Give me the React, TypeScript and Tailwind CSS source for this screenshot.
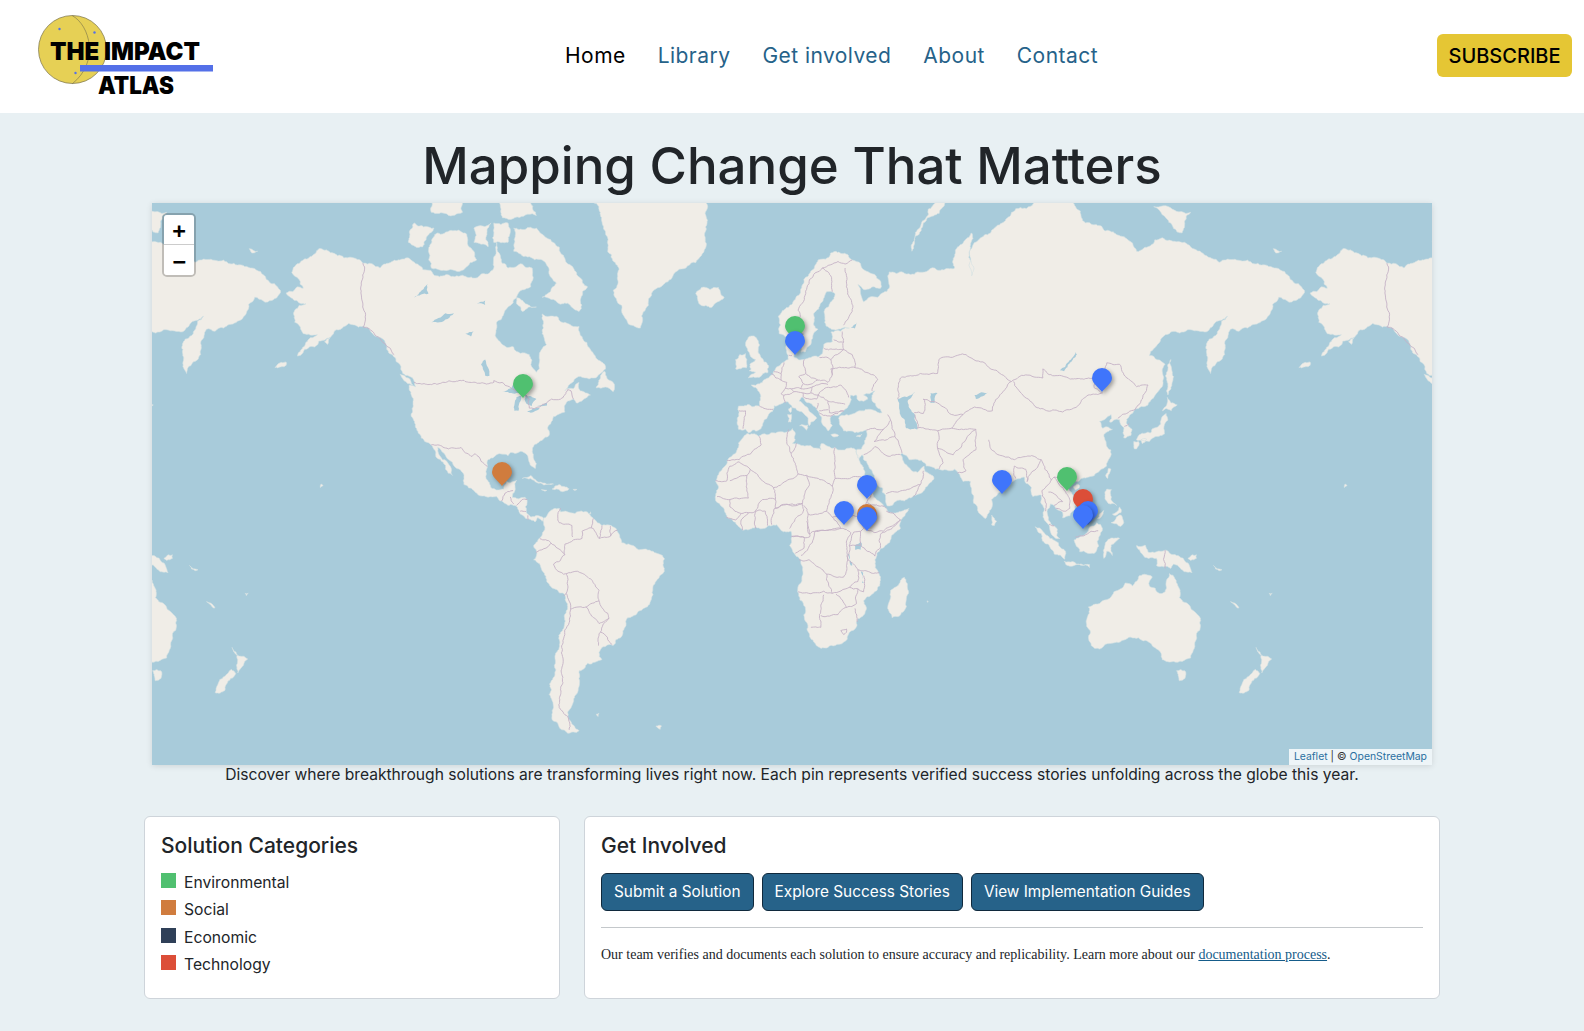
import React from 'react';

// lon,lat outlines, projected to web mercator at zoom 2 below
const LAND: string[] = [
  // north america
  '-168,65.6 -164,66.5 -162,66.3 -166,68.4 -163,69.7 -156.5,71.3 -150,70.5 -141,69.6 -135,69 -128,70 -124,70 -115,68 -108,68 -100,68 -95,69 -94,72 -90,69 -85,69.5 -81.5,69 -82,66.5 -87,65 -90,63.5 -94,61 -94.5,58.7 -92,57 -88,56.5 -82.5,55 -82,52.9 -80,51.3 -79,52 -79,55 -76.5,57 -78,59 -78,62.4 -73,62 -70,61 -65,60.3 -64,58.5 -61,56 -56,53 -55.7,52 -60,50 -66,50 -70,47 -65,49 -64.5,47 -61,46 -64,44.5 -66,44 -67,45 -70,43.5 -70,41.7 -74,40.5 -75,38.5 -76,37 -75.5,35.3 -78,33.8 -81,32 -81.3,30 -80,26.8 -80.4,25.2 -81.8,26 -82.8,28 -84,30 -86,30.4 -89,30.2 -90,29.2 -94,29.5 -97,28 -97.5,25 -97.7,22 -96,19 -94,18.2 -91.5,18.5 -90.5,21 -87,21.5 -87.5,19 -88.3,17 -88.5,15.8 -84,15.8 -83.3,14 -83.6,11 -82,9 -79.5,9.5 -77.5,8.6 -78,7.5 -79.5,8.8 -80.5,7.3 -83,8.3 -85.7,10 -87.5,13 -91.5,14 -94,16 -97,15.8 -102,18 -105.5,20 -105.5,22.5 -109,26 -112.5,30 -114.7,31.7 -113,28 -110,24 -109.5,23 -112,25 -115,28.5 -117,32.5 -120.5,34.5 -122.5,37.5 -124,40.5 -124,46 -124.7,48.4 -122.5,48 -123,49.3 -127,51 -130,54.5 -134,58 -139,60 -146,60.8 -151,59.5 -154,58 -158,56.5 -164,54.7 -160,58 -157,58.8 -162,59 -165,61 -165,63 -161,64 -165,64.5',
  // south america
  '-77.5,8.6 -75.5,10.8 -72,12 -71.5,10.8 -68,10.5 -62,10.7 -57,6 -52,5 -50,0 -44,-2.5 -39,-3 -35,-5.5 -35,-9 -39,-15 -39,-18 -41,-22 -48,-25.5 -48.5,-28 -53,-34 -57,-34.5 -58,-36 -57,-38 -62,-39 -65,-41 -65,-45 -66,-47 -69,-51 -68,-53 -65,-55 -69,-55.5 -74,-53 -75.5,-47 -73.5,-42 -73.5,-37 -71.5,-30 -70,-18 -76,-14 -81,-6 -80,-3 -81,-1 -78.5,2 -77.5,4 -77.5,7',
  // eurasia
  '-9,37 -9.5,38.7 -8.8,41.5 -9,43.2 -1.5,43.4 -1.2,46 -4.5,48.4 -1.5,48.7 1.5,50 4,52 8.5,54 8,57 10.5,57.5 10.5,54.5 14,54 19,54.5 21,57 24,57.5 23.5,59.3 30,60 23,60 21.3,61 21.3,63 25,65.5 22,65.8 17.5,62.5 17.5,60.5 19,59.8 16.5,57 14.5,55.5 13,55.5 11,59 8,58 5.3,59 5,62 10,64 14,67.5 19,70 25,71 31,70 41,67.3 41,66.3 33,66.8 35,64.3 40,65 44,66.3 44,68.5 54,68.5 60,69 67,69 68,71.5 73,73 73,68 74,72 81,73.5 87,75 100,76.5 104,77.7 113,74 127,72.5 131,71 140,72.5 150,71.5 160,69.7 170,70 180,69 190,66 187,64.5 181,65 178,62.5 170,60 164,59.8 162,57.5 162,55 157,51 155.7,56 156.5,58 163,62 155,59.3 143,59.3 135.5,54.8 141,53 140,48 135,43.5 130.5,42.5 127.5,39.8 129.4,37 129,35.2 126.5,34.5 126.5,37.5 125,39.6 121.5,39 122,41 118,39.2 119,37.3 122.5,37 119.5,35 122,31 121.5,28.5 118,24.5 113.5,22.3 110,21 108.2,21.6 106,19.5 109,15 109.2,11.5 105,8.7 105,10.5 102.5,12 100.7,13.5 99.5,11 100,8 103,5 104,1.4 101,3 100.3,6 98.5,8 98.5,12 97.5,16.5 94.5,16 94,19 91.5,22.5 88.5,21.7 86.5,20 82,16.5 80,15 80,12 78,8.5 76,10 73,18 72.6,21 70,21 69,22.5 67,25 61.5,25 57,26 56.5,27 51,28 48.5,30 48,29.5 50,26.5 51.5,25 54,24 56.3,26 56.5,24.3 59.7,22.5 55,17 52,15.7 45,13 43.3,12.8 42.7,16 39,21 35,28 34.5,29.5 33,28.5 32.5,30 32.5,31 34.3,31.3 35.8,34.5 36,36.8 32,36 28,36.5 26.5,38.5 26.2,40 29,41 35,42 41.5,41.5 38,44.5 39,47 35,46 36.5,45 33.5,44.5 32.5,46 30.5,46 28,42 26,40.8 23.5,40.5 24,38 22.5,36.5 19.5,41 18.5,42.5 13.5,45.5 12.3,44.5 16,41.8 18.5,40 16.5,39 16,38 15.5,40 12,42 8.5,44.3 3.5,43.3 3,41.8 0,39.5 -0.5,38 -2,36.7 -5.5,36 -6.5,37',
  // africa
  '-6,35.8 -2,35 10,37.2 11,34 10,33 15,32.3 20,31 20,32.8 25,31.7 32.5,31 32.5,30 35.5,24 37.3,19 39.5,15 43,12 44,10.5 51,12 48,5 41,-2 39,-6 40.5,-11 40.7,-15 35,-20 35.5,-24 32.8,-26 32,-29 28,-33 25,-34 20,-34.8 18.3,-34 15,-27 14.5,-22 11.8,-17 13.7,-11 12,-5 9,-1 9.5,4 6,4.3 4.5,6.3 -4,5.2 -7.5,4.4 -13,9 -17,14.7 -16,19 -17,21 -13,27.7 -10,30 -9,33',
  // australia, tasmania, nz
  '114,-22 113.5,-26 115,-34 118,-35 124,-33 129,-31.5 134,-32.5 138,-35 140,-38 144,-38.5 147,-38.5 150,-37.5 151.5,-33 153.5,-28 153,-25 149,-21 146,-19 145.5,-15 142.5,-10.8 141.5,-13 141,-17 139,-17.5 135.5,-15 136.5,-12 132,-11.5 129.5,-15 127,-14 123,-17 119,-20',
  '145,-41 148,-41 148,-43 146,-43.6',
  '173,-34.5 175.5,-37 178.5,-37.8 177,-39.5 175,-41.6 174.5,-39.5 174.7,-37.5',
  '172.7,-40.6 174.3,-41.7 171,-44.5 170.5,-46 167,-46.5 168,-44.5',
  // south east asia
  '131,-1 134,-0.8 135,-3.3 141,-2.6 145,-4.5 148,-6.5 150.5,-10.5 147,-9.5 144,-7.5 143,-9 138,-8 138,-5.5 133,-4 132,-2.5',
  '109,1 111,2 113,3 117,7 119,5 117.7,2 116,-3.8 111,-3.2 109.5,-0.5',
  '95.3,5.6 98,4 103.5,0 106,-3 105.8,-5.8 102,-4 98.5,0',
  '105.5,-6.5 108.5,-6.6 114.5,-7.7 114.5,-8.7 106,-7.5',
  '119.5,-5.5 120,0 121,1.2 125,1.5 122,-0.9 122.5,-4.5 120.5,-3',
  '120.5,18.5 122.2,18.3 122,15 124,13 121,13.7 120,15',
  '122,7 125.5,9.7 126.5,7 125.4,5.7',
  '117.2,8.4 119.5,11.2 119.2,10 117.8,8.4',
  '122.5,10 125,12.5 125.5,10.5 123.5,9.5',
  '120.1,23 121,25.2 122,25 120.8,22',
  '108.7,19.2 110.5,20.1 111,19.6 109.5,18.2',
  '80,9.7 81.8,7.5 81,6 80,6.2',
  // japan, sakhalin
  '130.9,34 132,35.5 136,36 137,37.3 139.5,38.5 140,40.5 141.4,41.3 142,39.5 140.8,35.7 137,34.6 135.5,33.5',
  '130,33.5 131.7,33.5 131,31.3 130.2,31.3',
  '132.5,33.9 134.5,34.2 134,33.3 133,32.8',
  '140,42 141.8,45.4 145.3,43.5 143.2,42 141,42.5',
  '142,46 143.5,49 143,54 142,53 142,48',
  // madagascar, europe islands
  '49.3,-12 50.4,-15.5 47.5,-25 45,-25.5 43.5,-22 44.5,-16.5',
  '-5.5,50 1.4,51.2 1.7,52.7 0,53.5 -2,56 -2,57.7 -3.5,58.6 -5.2,58.5 -6.2,56.5 -5,55 -3,54 -5,53 -4.5,52 -5.2,51.6 -3,51.3',
  '-10,52 -6.2,52.2 -6,54 -6.5,55.2 -8.5,55 -10,54',
  '-24,65.5 -22,66.4 -16,66.4 -14,65 -18.5,63.4 -22.5,63.9',
  '12.5,38 15.5,38.2 15,36.7',
  '8.3,41 9.7,41 9.5,39 8.5,39',
  '8.6,42.5 9.5,43 9.3,41.5',
  '23.5,35.5 26.3,35.3 24,35',
  '32.4,35 34.5,35.6 33.8,34.8',
  // arctic
  '-73,78.2 -60,82 -30,83.5 -18,80 -20,74 -22,70.5 -32,68 -40,65 -43.5,60 -48,61 -53,66 -51,69 -55,71 -58,75.5 -68,76',
  '-80,73.5 -72,71.5 -67,69 -62,66.5 -65,62.8 -72,64 -78,65 -73,67 -78,70 -88,71 -88,73.5',
  '-117,69 -105,69 -101,70 -105,73 -115,73 -118,71',
  '-125,72 -123,74 -116,73.5 -120,71.5',
  '-90,76.5 -78,76.5 -62,82.5 -80,83 -92,81',
  '-92,74.5 -80,74.7 -82,75.8 -92,76.5',
  '-95,74 -90,74 -90,72 -95,72',
  '-102,72 -97,71.5 -96,74 -102,73.5',
  '-117,75 -106,75 -106,76 -117,76.4',
  '-87,65 -80,63.5 -85,62.8 -87,64',
  '-59,47.7 -53,46.8 -53,49 -56,51.5 -57.5,50',
  '-128,50.8 -125,50 -123.5,48.4 -125.5,48.8',
  '52,71 56,74 68,77 60,76 53,72.5',
  '12,78 20,80 27,80 22,77.5 15,76.8',
  '137,75.5 150,75 147,73',
  '179,71.3 182,71 180,70.8',
  // caribbean and pacific specks
  '-85,22 -82,23 -77,20.5 -74,20.2 -77.5,19.9 -82,22',
  '-74.5,18.5 -72,20 -68.5,18.6 -71.5,17.8',
  '-78.3,18.3 -76.3,18.1 -77,17.8',
  '-67.2,18.4 -65.7,18.4 -66.5,18',
  '-156,19 -155,19.7 -155.7,20.2 -156,19.7',
  '177.5,-17.5 178.7,-17.5 178,-18.3',
  '164,-20.3 167,-22.4 166,-22',
  '-154.5,57.5 -152.5,58.2 -153.5,57',
  '-172,52.3 -168,53.5 -168,52.8',
  '158,-8 161,-9.5 160,-9.8',
  '149,-5.5 152,-4.2 152,-5.5 150,-6.2',
  '57.3,-20 57.8,-20.3 57.4,-20.5',
  '-61.5,10 -61,10.8 -60.9,10.1',
  '-59,-51.5 -58,-51.3 -58.3,-52',
  '-38,-54 -36,-54 -36.5,-54.7',
];

const LAKES: string[] = [
  '-92,46.7 -88,48.5 -85,47.8 -84.5,46.5 -87,46.5',
  '-87.8,42 -86.3,42 -85,46 -87,45.5',
  '-84,46 -80,45 -81.7,43.2 -83.5,43.8',
  '-83.3,41.7 -79,42.8 -79,42.5 -82,41.5',
  '-79.7,43.3 -76.3,44 -76.3,43.4 -79,43.2',
  '-98,50.5 -96.5,50.5 -98,54 -99.5,53',
  '-123,65 -118,67 -118,65.5',
  '-117,61 -112,62.5 -109,62.5 -114,61',
  '-105,59 -102,59.5 -103,58.5',
  '-101,64 -98,64.5 -98,63.8',
  '47,45 53,46.8 50.5,44.5 53,41 54,37 50,37.3 49,40 47.5,43',
  '58.5,46.5 61,46.5 60,44 58.5,44',
  '104,51.7 109.5,55.5 110,55 105.5,51.5',
  '32,-1 34,0.3 34,-2.5 32,-2.5',
  '30.5,60 32.8,61 32,59.9',
  '12.5,59.3 14,59 13.5,58.5',
  '74,46 79,46.7 74.5,45',
  '29.3,-4 29.8,-4 31,-8 30.5,-8',
  '34,-10 34.8,-10.5 35,-14 34.5,-14',
];

const BORDERS: string[] = [
  '-123,49 -95,49 -95,49.4 -89.5,48 -84.5,46.5 -82.5,45 -82.5,42.7 -79,43 -76.5,44 -74.7,45 -71.5,45 -69,47.3 -67.8,47 -67,45',
  '-141,69.6 -141,60.2 -137,59 -130,55',
  '-117,32.5 -114.7,32.5 -111,31.3 -106.5,31.7 -103,29 -101.5,29.8 -99.5,27.5 -97.2,25.9',
  '-92.2,14.5 -91,17.2 -89,17.9 -88.2,18',
  '-89.2,15.9 -88,13.5',
  '-87,13 -85,15 -83.2,15',
  '-85.7,11 -83.7,10.9',
  '-83,9.6 -82.9,8',
  '-71.5,12 -72.5,9 -72,7 -67.5,6 -67.3,2',
  '-51.5,4.4 -54,2.3 -58,1.5 -60,5 -60.7,5.2 -64,4 -64,1.5 -67,1 -70,-0.5 -70,-4.2 -74,-7.5 -73,-9.5 -70.5,-11 -65.5,-10 -60,-14 -58,-16.5 -58,-20 -55,-24 -54.5,-25.6 -57.5,-30 -53.5,-33.7',
  '-60,8.5 -60.7,5.2',
  '-57,6 -58,1.5',
  '-54,5.8 -54,2.3',
  '-78.8,1.4 -75,0 -70,-4.2',
  '-80.2,-3.4 -75,-0.2',
  '-69.5,-11 -69,-16 -69.5,-17.5 -70.4,-18.4',
  '-69.5,-17.5 -68,-22.8 -65,-22 -62.5,-22 -58,-20',
  '-62.5,-22 -58,-27.3 -54.5,-25.6',
  '-68,-22.8 -68.5,-27 -70.5,-32 -71,-40 -72,-50 -69,-52 -68.5,-54.8',
  '-58.2,-34 -58,-30.5 -57.5,-30',
  // europe
  '-1.7,43.3 3.2,42.4',
  '-8.8,42 -6.5,42 -6.5,41 -7,39.5 -7.4,37.2',
  '2.5,51 4.2,50 6,49.5 8,49 7.5,47.6 6,46.3 7,45.9 7.5,44',
  '7,53.4 6,51 6,49.5',
  '3.4,51.4 6,51',
  '8.7,54.9 9.8,54.8',
  '14.2,54 14.7,51 12.2,50.3 13.8,48.7 13,47.5 9.6,47.5 7.5,47.6',
  '7,45.9 10.5,46.8 13.7,46.5 13.7,45.6',
  '9.6,47.5 10.5,46.8',
  '13,47.5 17,48 16.5,46.5 13.7,46.5',
  '14.7,51 19,49.5 22.5,49 24,50.7 23.5,54 19.5,54.4',
  '13.8,48.7 17,48.7 18.8,49.5',
  '17,48 22.5,48.5',
  '16.5,46.5 19,46 22,47.8 24.5,48 27,48.4 29.7,45.4',
  '19,46 22.5,44.5 26,44 28.5,43.7',
  '22.5,44.5 23,41.5 26.3,41.7 28,42',
  '19.4,41.5 20.9,40.8 26,41.3',
  '19.4,42 22.5,42.3',
  '13.7,45.6 16,45 18.5,45 19,46',
  '19,44 18.5,42.5',
  '24,50.7 23.5,52 32,52.3 40,49.7 38,47',
  '23.5,54 28,56 31,55 32,52.3',
  '21,56.3 28,56 28,57.5 27.5,59.4',
  '24.5,57.9 28,57.5',
  '28,60.5 31,62.8 29,67 28.5,69',
  '24,65.8 23.5,68 20.5,69 16,67.5 12,63 12.5,61 11.3,59',
  '20.5,69 26,69.8 28.5,69.5 31,70',
  // asia
  '47,45 48,50 55,51 61,51 61.5,54 71,55 77,53.5 83,51 87,49.2 92,50.7 98,50 98,52 102,50.5 107,50 114,50 116.7,49.8 119.5,50 120.5,53.3 125,53 127.5,50 131,48 135,48.4 133,45 131,43 130.6,42.4',
  '87.8,49.2 91,46 96,42.8 105,41.7 111,43.7 112,45 119,46.5 116,47.8 116.7,49.8',
  '124.4,40 128,41.5 130.6,42.4',
  '126.7,37.8 128.4,38.6',
  '87,49.2 82.5,45.5 80.3,42',
  '52.8,41.5 56,41.3 56,45 61,44 66,41 70,41 74,43 80.3,42',
  '44.5,39.5 46,35 48.5,30',
  '54,37.3 61,36.6 61,31.5 63,27 61.5,25',
  '61,31.5 66.5,29.5 71,34 74.5,37 71.5,37 66,37.3 61,36.6',
  '68,23.8 71,24.5 70,28 74.5,31 74.5,37',
  '79,34 80,31 88,28 95,29 97.5,28 98.7,25 101,21.5',
  '102,22.5 105,19 107,16 107.5,12 106,11 102.5,12',
  '101,21.5 100,20 97.7,18 99,11',
  '100,17.5 105,14.3 102,13',
  '92.5,21 94,24 97.5,28',
  '88.5,22 88,26 92,25 92.5,21',
  '101,21.5 102,22.5 108,21.6',
  '46,35 38.7,33.5 42,37 36,36.8',
  '26.3,41.7 28,41.9',
  '42,37 44.5,39.5 43.5,41',
  '48,29.5 44,29 39,32 35,29.5',
  '43,17 52,19 55,20 52.5,16',
  '56,24.5 55,20',
  '100.2,6.5 102,6',
  '109.5,2 115,4 117.5,4.2',
  '141,-2.6 141,-9',
  '54,37.3 53,41',
  '66,37.3 70,41',
  // africa
  '-1.7,35 -1,32.5 -8.7,28 -13,27.7',
  '-8.7,27.3 -12,26 -13,21.3 -17,21.3',
  '8.6,36.9 8,33 9.5,30 12,23.5 3.3,19 -4.8,25 -8.7,27.3',
  '-4.8,25 -6,23 -12,21.3',
  '-6,23 -5.5,15.5 -12,15 -16.5,16',
  '3.3,19 4,15 -0.5,15 -3,11 -5.5,10.5 -8,10.2 -12,12.5 -12,15',
  '11.5,33 9.5,30',
  '12,23.5 15,23 24,19.5 25,22 25,31.7',
  '15,23 16,20 13.5,13.7 4,12 4,15',
  '24,19.5 23.5,15.7 22,11 15.5,10 14,13',
  '25,22 36.5,22',
  '22,11 24,9 34,9.5 36,14 38.5,18',
  '36,14 43,12',
  '43,11 48,8 42,4 39,3.5 35,5 34,9.5',
  '41,-1.5 41,3 45,5 48,8',
  '41,-1.5 39,-4.7 34,-1 34,4 35,5',
  '30,-1 31.5,3.7 34,4',
  '34,-1 30,-1 29.5,-6 33,-9.5 40.5,-10.5',
  '15,7.5 16,3 27,5 24,9',
  '12.3,-6 16,-6 22,-11 28,-12 29,-8 29.5,-6 29,-1 30.5,3.5 27,5 18,4 16,-1 13,-4.5',
  '12,-17 24,-17.5 22,-13 22,-11',
  '24,-17.5 30,-15.5 33,-13.5 33,-9.5',
  '16.5,-28.5 20,-28.5 20,-22 21,-18',
  '20,-24.8 26,-24.5 29,-22.2 25.3,-17.8',
  '29,-22.2 32.5,-21 33,-16 30,-15.5',
  '35,-11.5 35,-17 33,-16',
  '2.7,6.3 3.5,11.8 4,12 13.5,13.7 14,11.5 9,5',
  '9.7,2.2 16,2 15.5,10',
  '9.7,2.2 14,2 14,-2 11,-3.7',
  '-3,5 -3,11 0.5,11 1.2,6',
  '-7.5,4.4 -8,8 -5.5,10.5',
  '-13.3,9 -10,8 -8,10',
  '27,-29.5 29,-29 29,-30 28,-30.7 27,-29.5',
  '32.8,-26.8 32,-22.5',
];

type Pt = [number, number];

// zoom 2 tile world is 1024px wide, x=0 of the svg sits at lon -215
const project = (lon: number, lat: number): Pt => {
  const rad = (lat * Math.PI) / 180;
  return [
    (lon + 180) * (1024 / 360) + 100,
    339.7 - (Math.log(Math.tan(Math.PI / 4 + rad / 2)) / (2 * Math.PI)) * 1024,
  ];
};

// midpoint displacement so the hand-typed outlines read as coastline, same result each run
let seed = 1;
const noise = () => {
  const s = Math.sin(seed++ * 12.9898) * 43758.5453;
  return s - Math.floor(s) - 0.5;
};

const rough = (a: Pt, b: Pt, amp: number, out: Pt[]) => {
  const dx = b[0] - a[0];
  const dy = b[1] - a[1];
  const len = Math.hypot(dx, dy);
  if (len < 2.5) {
    out.push(b);
    return;
  }
  const off = noise() * amp * Math.min(len, 16);
  const mid: Pt = [(a[0] + b[0]) / 2 - (dy / len) * off, (a[1] + b[1]) / 2 + (dx / len) * off];
  rough(a, mid, amp, out);
  rough(mid, b, amp, out);
};

const toPath = (line: string, close: boolean, amp: number) => {
  const pts = line.split(' ').map((pair) => {
    const [lon, lat] = pair.split(',').map(Number);
    return project(lon, lat);
  });
  const out: Pt[] = [pts[0]];
  pts.forEach((p, i) => {
    if (i > 0) rough(pts[i - 1], p, amp, out);
  });
  if (close) rough(pts[pts.length - 1], pts[0], amp, out);
  return `M${out.map((p) => `${p[0].toFixed(1)} ${p[1].toFixed(1)}`).join('L')}${close ? 'Z' : ''}`;
};

const landPath = LAND.map((l) => toPath(l, true, 0.35)).join('');
const lakePath = LAKES.map((l) => toPath(l, true, 0.3)).join('');
const borderPath = BORDERS.map((l) => toPath(l, false, 0.25)).join('');

const PINS = [
  { color: '#50c070', pos: 'left-[633px] top-[113px]' },
  { color: '#50c070', pos: 'left-[361px] top-[171px]' },
  { color: '#d07c3e', pos: 'left-[340px] top-[259px]' },
  { color: '#3f75fb', pos: 'left-[633px] top-[128px]' },
  { color: '#3f75fb', pos: 'left-[940px] top-[165px]' },
  { color: '#3f75fb', pos: 'left-[705px] top-[272px]' },
  { color: '#3f75fb', pos: 'left-[840px] top-[267px]' },
  { color: '#50c070', pos: 'left-[905px] top-[264px]' },
  { color: '#dc4e38', pos: 'left-[921px] top-[286px]' },
  { color: '#3f75fb', pos: 'left-[926px] top-[298px]' },
  { color: '#3f75fb', pos: 'left-[921px] top-[302px]' },
  { color: '#3f75fb', pos: 'left-[682px] top-[298px]' },
  { color: '#d07c3e', pos: 'left-[705px] top-[301px]' },
  { color: '#3f75fb', pos: 'left-[705px] top-[304px]' },
];

const LEGEND = [
  { label: 'Environmental', color: 'bg-[#50c070]' },
  { label: 'Social', color: 'bg-[#d07c3e]' },
  { label: 'Economic', color: 'bg-[#2f4058]' },
  { label: 'Technology', color: 'bg-[#dc4e38]' },
];

const Logo = () => (
  <svg viewBox="12 0 214 113" className="w-[214px] h-[113px]">
    <circle cx="72.5" cy="49.5" r="34" fill="#e6d055" stroke="#77704a" strokeWidth="0.7" />
    <path d="M72 15.5 C 90 25 100 62 72 84" fill="none" stroke="#77704a" strokeWidth="0.6" />
    <circle cx="59.5" cy="29" r="1.2" fill="#5470e8" />
    <circle cx="94.5" cy="32.5" r="1.2" fill="#5470e8" />
    <circle cx="75.5" cy="73" r="1.2" fill="#5470e8" />
    <rect x="80" y="65" width="133" height="6.5" fill="#5470e8" />
    <text x="50" y="60" textLength="150" lengthAdjust="spacingAndGlyphs" className="[font-family:Inter,sans-serif]" fontWeight="900" fontSize="25" fill="#000">THE IMPACT</text>
    <text x="98" y="94" textLength="76" lengthAdjust="spacingAndGlyphs" className="[font-family:Inter,sans-serif]" fontWeight="900" fontSize="24" fill="#000">ATLAS</text>
  </svg>
);

const Pin = ({ color, pos }: { color: string; pos: string }) => (
  <svg viewBox="0 0 20 24" className={`absolute w-5 h-6 drop-shadow-[2px_2px_2px_rgba(0,0,0,0.35)] ${pos}`}>
    <path d="M10 24 C 7.5 20 0 15.5 0 10 A10 10 0 0 1 20 10 C 20 15.5 12.5 20 10 24Z" fill={color} />
  </svg>
);

const WorldMap = () => (
  <div className="relative h-[562px] mx-2 overflow-hidden bg-[#a8cbda] shadow-[0_1px_6px_rgba(0,0,0,0.12)]">
    <svg viewBox="0 0 1280 562" className="block w-[1280px] h-[562px] blur-[0.3px]">
      {[-1024, 0, 1024].map((dx) => (
        <g key={dx} transform={`translate(${dx} 0)`}>
          <path d={landPath} fill="#f0ede7" stroke="#d3e0e2" strokeWidth="0.6" strokeLinejoin="round" />
          <path d={lakePath} fill="#a8cbda" />
          <path d={borderPath} fill="none" stroke="#c5b2c6" strokeWidth="0.9" strokeLinejoin="round" />
        </g>
      ))}
    </svg>
    {PINS.map((p, i) => (
      <Pin key={i} color={p.color} pos={p.pos} />
    ))}
    <div className="absolute left-[10px] top-[10px] w-[34px] rounded-[5px] border-2 border-black/20 bg-clip-padding [font-family:'DejaVu_Sans_Mono',monospace]">
      <div className="h-[30px] flex items-center justify-center pt-[2px] bg-white rounded-t-[3px] border-b border-[#ccc] text-[22px] font-bold text-black">+</div>
      <div className="h-[30px] flex items-center justify-center pt-[2px] bg-white rounded-b-[3px] text-[22px] font-bold text-black">−</div>
    </div>
    <div className="absolute right-0 bottom-0 h-[16px] px-[5px] flex items-center gap-[3px] bg-white/80 text-[10.4px] text-[#333] [font-family:Inter,sans-serif]">
      <span className="text-[#2a6fa0]">Leaflet</span>
      <span>|</span>
      <span>©</span>
      <span className="text-[#2a6fa0]">OpenStreetMap</span>
    </div>
  </div>
);

const App: React.FC = () => {
  return (
    <div className="min-h-screen bg-[#e8f0f3] text-[#212529] [font-family:Inter,sans-serif]">
      <header className="h-[113px] bg-white flex items-center justify-between px-3">
        <Logo />
        <nav className="flex items-center gap-8 mb-[2px] text-[21px] leading-none tracking-[0.45px] text-[#266289]">
          <a className="text-black">Home</a>
          <a>Library</a>
          <a>Get involved</a>
          <a>About</a>
          <a>Contact</a>
        </nav>
        <button className="w-[135px] h-[43px] mb-[2px] rounded-md bg-[#e5c634] text-[20px] font-medium text-black">SUBSCRIBE</button>
      </header>

      <main className="w-[1320px] mx-auto px-3">
        <h1 className="pt-[23px] mb-[6px] h-[84px] text-center text-[51px] leading-[60px] font-medium">Mapping Change That Matters</h1>
        <WorldMap />
        <p className="text-center text-[15.63px] leading-[19px]">
          Discover where breakthrough solutions are transforming lives right now. Each pin represents verified success stories unfolding across the globe this year.
        </p>

        <div className="flex gap-6 mt-8">
          <section className="w-[416px] h-[183px] bg-white border border-[#ced4da] rounded-md p-4">
            <h2 className="mt-[1px] text-[21px] leading-6 font-medium mb-[13px]">Solution Categories</h2>
            {LEGEND.map((item) => (
              <div key={item.label} className="flex items-start gap-2 h-[27.3px]">
                <span className={`w-[15px] h-[15px] mt-[2px] ${item.color}`}></span>
                <span className="text-[15.7px] leading-6">{item.label}</span>
              </div>
            ))}
          </section>

          <section className="flex-1 h-[183px] bg-white border border-[#ced4da] rounded-md p-4">
            <h2 className="mt-[1px] text-[21px] leading-6 font-medium mb-[15px]">Get Involved</h2>
            <div className="flex gap-2">
              <button className="h-[38px] px-3 rounded-md bg-[#266289] border border-[#10293c] text-white text-[15.35px]">Submit a Solution</button>
              <button className="h-[38px] px-3 rounded-md bg-[#266289] border border-[#10293c] text-white text-[15.35px]">Explore Success Stories</button>
              <button className="h-[38px] px-3 rounded-md bg-[#266289] border border-[#10293c] text-white text-[15.35px]">View Implementation Guides</button>
            </div>
            <hr className="my-4 border-[#c4c8cb]" />
            <p className="text-[14px] leading-[21px] [font-family:'Liberation_Serif',serif]">
              Our team verifies and documents each solution to ensure accuracy and replicability. Learn more about our{' '}
              <a className="underline text-[#155c8a]">documentation process</a>.
            </p>
          </section>
        </div>
      </main>
    </div>
  );
};

export default App;
